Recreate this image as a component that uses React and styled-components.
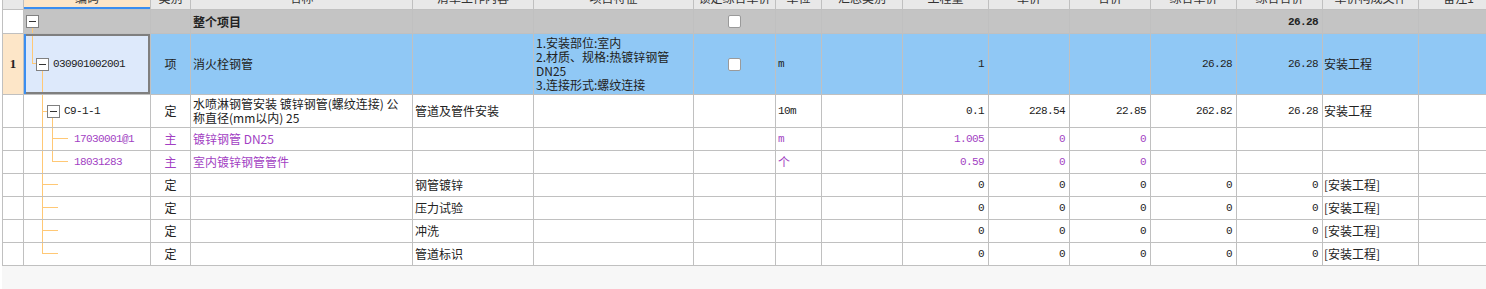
import React from 'react';
import styled, { createGlobalStyle } from 'styled-components';

const GlobalStyle = createGlobalStyle`
  body {
    margin: 0;
    background: #f7f7f7;
    font-family: "Noto Sans CJK SC", sans-serif;
    font-size: 12px;
    color: #222;
  }
`;

const COLS = [21, 127, 40, 222, 121, 160, 82, 46, 81, 86, 81, 81, 86, 86, 96, 80];
const LINE = '#c0c0c0';
const TREE = '#ffc875';
const PURPLE = '#a23fc3';

const Page = styled.div`
  height: 289px;
  overflow: hidden;
  border-left: 2px solid #fff;
  box-sizing: border-box;
`;

const Grid = styled.div`
  margin-top: -14px;
  width: max-content;
  border-left: 1px solid ${LINE};
`;

const Row = styled.div`
  display: grid;
  grid-template-columns: ${COLS.map((c) => c + 'px').join(' ')};
  height: ${(p) => p.$h}px;
  background: ${(p) => p.$bg || '#fff'};
`;

const Cell = styled.div`
  box-sizing: border-box;
  border-right: 1px solid ${LINE};
  border-bottom: 1px solid ${LINE};
  display: flex;
  align-items: center;
  justify-content: ${(p) =>
    p.$align === 'right' ? 'flex-end' : p.$align === 'center' ? 'center' : 'flex-start'};
  padding: ${(p) => (p.$align === 'right' ? '0 4px 0 0' : p.$align === 'center' ? '0' : '0 0 0 2px')};
  color: ${(p) => (p.$purple ? PURPLE : '#222')};
  font-weight: ${(p) => (p.$bold ? 700 : 400)};
  line-height: 14px;
  white-space: nowrap;
  overflow: hidden;
`;

const HeadCell = styled(Cell)`
  justify-content: center;
  padding: 0;
  background: ${(p) => (p.$active ? '#fde6c8' : '#e8e8e8')};
  box-shadow: ${(p) => (p.$active ? 'inset 0 -2px 0 #3b8ef0' : 'none')};
  color: #333;
`;

const RowNum = styled(Cell)`
  justify-content: center;
  padding: 0;
  background: ${(p) => p.$bg || '#fff'};
  font-family: "Liberation Serif", serif;
  font-weight: 700;
  font-size: 13px;
`;

const CodeCell = styled(Cell)`
  position: relative;
  padding: 0 0 0 ${(p) => p.$pad}px;
  gap: 4px;
  background: ${(p) => (p.$focus ? '#dde9fb' : 'transparent')};
  box-shadow: ${(p) =>
    p.$focus
      ? 'inset 2px 0 0 #3b8ef0, inset -2px 0 0 #7f7f7f, inset 0 2px 0 #7f7f7f, inset 0 -2px 0 #7f7f7f'
      : 'none'};
`;

const Lines = styled.svg`
  position: absolute;
  left: 0;
  top: 0;
`;

const MinusBox = styled.span`
  position: relative;
  box-sizing: border-box;
  width: 13px;
  height: 13px;
  flex: none;
  border: 1px solid #808080;
  background: #fff;
  display: inline-flex;
  align-items: center;
  justify-content: center;

  &::before {
    content: '';
    width: 7px;
    height: 1px;
    background: #333;
  }
`;

const Num = styled.span`
  font-family: "Liberation Mono", monospace;
  font-size: 11px;
  letter-spacing: -0.6px;
  font-weight: ${(p) => (p.$bold ? 700 : 400)};
  color: ${(p) => (p.$purple ? PURPLE : 'inherit')};
`;

const Check = styled.span`
  box-sizing: border-box;
  width: 13px;
  height: 13px;
  border: 1px solid #9a9a9a;
  border-radius: 2px;
  background: #fff;
`;

const Lines2 = styled.span`
  display: block;
  white-space: nowrap;
`;

const HEADERS = ['', '编码', '类别', '名称', '清单工作内容', '项目特征', '锁定综合单价', '单位', '汇总类别', '工程量', '单价', '合价', '综合单价', '综合合价', '单价构成文件', '备注1'];

const dingRow = (content, last) => ({
  h: 23,
  tree: { pad: 0, segs: [[18, 0, 1, last ? 11 : 22], [18, 10, 16, 1]] },
  type: '定',
  content,
  qty: '0', price: '0', total: '0', uprice: '0', utotal: '0',
  file: '[安装工程]',
});

const ROWS = [
  {
    h: 24,
    bg: '#c4c4c4',
    rnBg: '#fff',
    tree: { pad: 2, box: true, segs: [[8, 18, 1, 5]] },
    name: '整个项目',
    bold: true,
    lock: true,
    utotal: '26.28',
  },
  {
    h: 61,
    bg: '#90c8f5',
    rn: '1',
    rnBg: '#fde6c8',
    tree: { pad: 12, box: true, focus: true, code: '030901002001', segs: [[8, 2, 1, 28], [8, 29, 4, 1], [18, 37, 1, 21]] },
    type: '项',
    name: '消火栓钢管',
    feature: ['1.安装部位:室内', '2.材质、规格:热镀锌钢管', 'DN25', '3.连接形式:螺纹连接'],
    lock: true,
    unit: 'm',
    qty: '1',
    uprice: '26.28',
    utotal: '26.28',
    file: '安装工程',
  },
  {
    h: 33,
    tree: { pad: 23, box: true, code: 'C9-1-1', segs: [[18, 0, 1, 32], [18, 16, 5, 1], [28, 23, 1, 9]] },
    type: '定',
    name: ['水喷淋钢管安装 镀锌钢管(螺纹连接) 公', '称直径(mm以内) 25'],
    content: '管道及管件安装',
    unit: '10m',
    qty: '0.1', price: '228.54', total: '22.85', uprice: '262.82', utotal: '26.28',
    file: '安装工程',
  },
  {
    h: 23,
    purple: true,
    tree: { pad: 50, code: '17030001@1', segs: [[18, 0, 1, 22], [28, 0, 1, 22], [28, 10, 16, 1]] },
    type: '主',
    name: '镀锌钢管 DN25',
    unit: 'm',
    qty: '1.005', price: '0', total: '0',
  },
  {
    h: 23,
    purple: true,
    tree: { pad: 50, code: '18031283', segs: [[18, 0, 1, 22], [28, 0, 1, 11], [28, 10, 16, 1]] },
    type: '主',
    name: '室内镀锌钢管管件',
    unit: '个',
    qty: '0.59', price: '0', total: '0',
  },
  dingRow('钢管镀锌'),
  dingRow('压力试验'),
  dingRow('冲洗'),
  dingRow('管道标识', true),
];

const multi = (v) =>
  Array.isArray(v) ? v.map((t, i) => <Lines2 key={i}>{t}</Lines2>) : v;

const NumCell = ({ v, row }) => (
  <Cell $align="right">
    {v !== undefined && (
      <Num $bold={row.bold} $purple={row.purple}>{v}</Num>
    )}
  </Cell>
);

const DataRow = ({ row }) => {
  const t = row.tree;
  const ch = row.h - 1;
  return (
    <Row $h={row.h} $bg={row.bg}>
      <RowNum $bg={row.rnBg}>{row.rn}</RowNum>
      <CodeCell $pad={t.pad} $focus={t.focus}>
        <Lines width="126" height={ch}>
          {t.segs.map(([x, y, w, h], i) => (
            <rect key={i} x={x} y={y} width={w} height={h} fill={TREE} />
          ))}
        </Lines>
        {t.box && <MinusBox />}
        {t.code && <Num $purple={row.purple}>{t.code}</Num>}
      </CodeCell>
      <Cell $align="center" $purple={row.purple}>{row.type}</Cell>
      <Cell $purple={row.purple} $bold={row.bold}>
        <div>{multi(row.name)}</div>
      </Cell>
      <Cell>{row.content}</Cell>
      <Cell>
        <div>{multi(row.feature)}</div>
      </Cell>
      <Cell $align="center">{row.lock && <Check />}</Cell>
      <Cell $purple={row.purple}>
        {row.unit && (row.unit === '个' ? row.unit : <Num>{row.unit}</Num>)}
      </Cell>
      <Cell />
      <NumCell v={row.qty} row={row} />
      <NumCell v={row.price} row={row} />
      <NumCell v={row.total} row={row} />
      <NumCell v={row.uprice} row={row} />
      <NumCell v={row.utotal} row={row} />
      <Cell style={{ paddingLeft: 1 }}>{row.file}</Cell>
      <Cell />
    </Row>
  );
};

const App = () => (
  <Page>
    <GlobalStyle />
    <Grid>
      <Row $h={24} $bg="#e8e8e8">
        {HEADERS.map((h, i) => (
          <HeadCell key={i} $active={i === 1}>{h}</HeadCell>
        ))}
      </Row>
      {ROWS.map((row, i) => (
        <DataRow key={i} row={row} />
      ))}
    </Grid>
  </Page>
);

export default App;
